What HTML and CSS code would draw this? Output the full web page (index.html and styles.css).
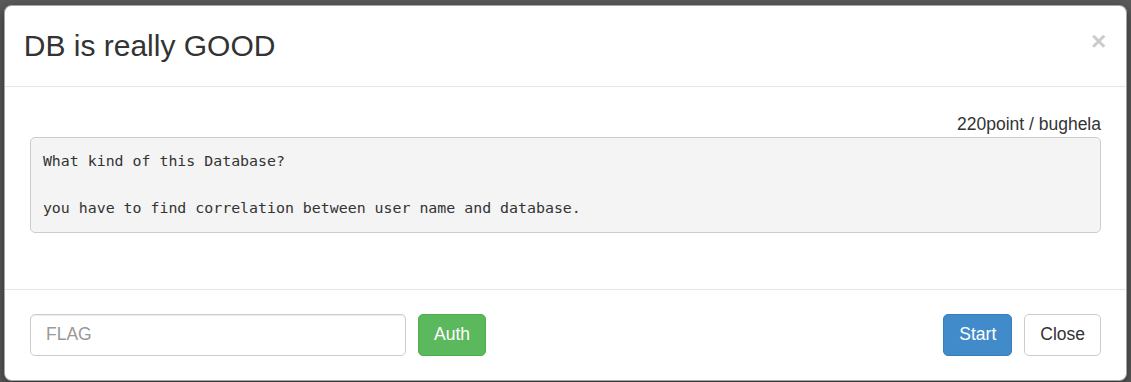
FILE: index.html
```html
<!DOCTYPE html>
<html lang="en">
<head>
<meta charset="utf-8">
<title>DB is really GOOD</title>
<link rel="stylesheet" href="styles.css">
</head>
<body>
<div class="backdrop">
  <div class="modal">
    <div class="modal-header">
      <button class="close" type="button" aria-label="Close">&times;</button>
      <h3 class="modal-title">DB is really GOOD</h3>
    </div>
    <div class="modal-body">
      <div class="meta">220point / bughela</div>
      <pre class="desc">What kind of this Database?

you have to find correlation between user name and database.</pre>
    </div>
    <div class="modal-footer">
      <div class="auth-group">
        <input class="flag-input" type="text" placeholder="FLAG">
        <button class="btn btn-success" type="button">Auth</button>
      </div>
      <div class="actions">
        <button class="btn btn-primary" type="button">Start</button>
        <button class="btn btn-default" type="button">Close</button>
      </div>
    </div>
  </div>
</div>
</body>
</html>
```

FILE: styles.css
```css
html, body {
  margin: 0;
  padding: 0;
}

body {
  background: #5a5a5a;
  font-family: "Liberation Sans", Arial, Helvetica, sans-serif;
  font-size: 17.5px;
  line-height: 1.428571;
  color: #333;
  height: 382px;
  overflow: hidden;
}

.backdrop {
  padding: 5px 4px 0 4px;
}

.modal {
  background: #fff;
  border: 1px solid rgba(0, 0, 0, 0.35);
  border-radius: 7.5px;
  box-shadow: 0 4px 12px rgba(0, 0, 0, 0.5);
  overflow: hidden;
}

.modal-header {
  padding: 18.75px 18.75px 18.75px 18.75px;
  border-bottom: 1px solid #e5e5e5;
  display: flex;
  flex-direction: row-reverse;
  justify-content: space-between;
  align-items: flex-start;
}

.modal-title {
  margin: 0;
  font-size: 30px;
  font-weight: 400;
  line-height: 42.86px;
  color: #333;
}

.close {
  margin-top: 3px;
  margin-right: 1px;
  padding: 0;
  background: transparent;
  border: 0;
  font-family: "Liberation Sans", Arial, sans-serif;
  font-size: 26.25px;
  font-weight: 700;
  line-height: 1;
  color: #000;
  opacity: 0.2;
  text-shadow: 0 1px 0 #fff;
  cursor: pointer;
}

.modal-body {
  padding: 25px 25px 25px 25px;
}

.meta {
  text-align: right;
  line-height: 25px;
}

.desc {
  margin: 0 0 12.5px 0;
  padding: 11.875px;
  background: #f4f4f4;
  border: 1px solid #ccc;
  border-radius: 5px;
  font-family: "DejaVu Sans Mono", "Liberation Mono", monospace;
  font-size: 14.9px;
  line-height: 23.2px;
  color: #333;
  white-space: pre-wrap;
}

.modal-footer {
  margin-top: 18.75px;
  padding: 23.75px 25px 24px 25px;
  border-top: 1px solid #e5e5e5;
  display: flex;
  justify-content: space-between;
  align-items: center;
}

.auth-group,
.actions {
  display: flex;
  gap: 12px;
  align-items: center;
}

.flag-input {
  box-sizing: border-box;
  width: 376px;
  height: 42.5px;
  padding: 7.5px 15px;
  font-family: "Liberation Sans", Arial, sans-serif;
  font-size: 17.5px;
  color: #555;
  background: #fff;
  border: 1px solid #ccc;
  border-radius: 5px;
  box-shadow: inset 0 1px 1px rgba(0, 0, 0, 0.075);
  outline: none;
}

.flag-input::placeholder {
  color: #999;
}

.btn {
  box-sizing: border-box;
  height: 42.5px;
  padding: 7.5px 15px;
  font-family: "Liberation Sans", Arial, sans-serif;
  font-size: 17.5px;
  line-height: 25px;
  border: 1px solid transparent;
  border-radius: 5px;
  cursor: pointer;
}

.btn-success {
  background: #5cb85c;
  border-color: #4cae4c;
  color: #fff;
}

.btn-primary {
  background: #428bca;
  border-color: #357ebd;
  color: #fff;
}

.btn-default {
  background: #fff;
  border-color: #ccc;
  color: #333;
}
```
